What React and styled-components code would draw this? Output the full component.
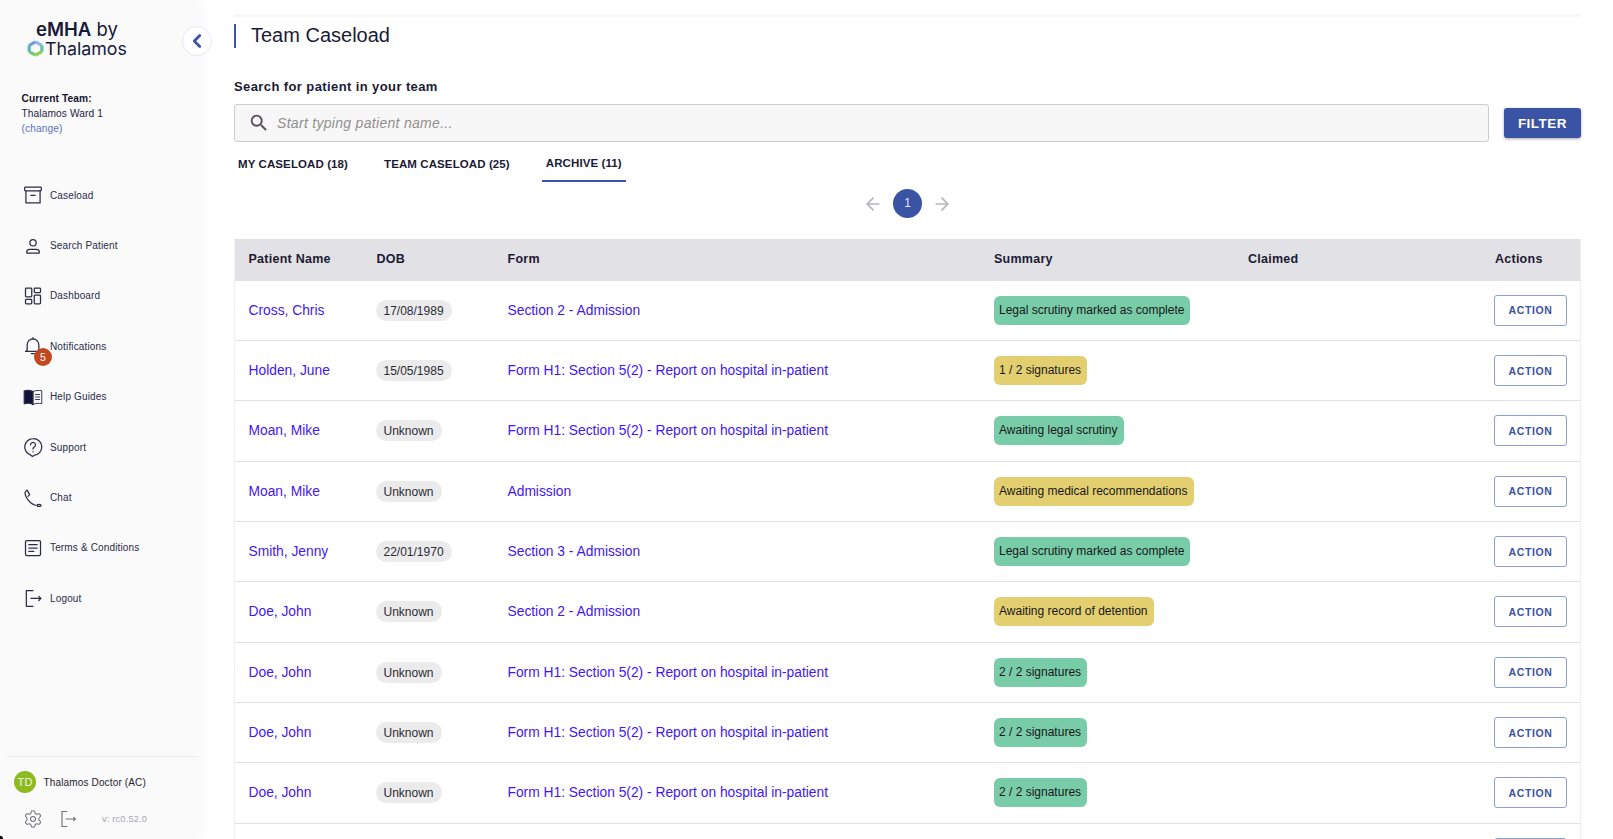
import React from "react";
import styled, { createGlobalStyle } from "styled-components";
import { ArrowLeft, ArrowRight, ChevronLeft, Settings } from "lucide-react";
import { MdSearch } from "react-icons/md";

const Global = createGlobalStyle`
  html, body {
    margin: 0;
    padding: 0;
    background: #fff;
    font-family: "Liberation Sans", Arial, sans-serif;
    color: #1b1b35;
  }
  * { box-sizing: border-box; }
`;

const Page = styled.div`
  position: relative;
  display: flex;
  width: 1613px;
  height: 839px;
  overflow: hidden;
`;

const Corner = styled.div`
  position: absolute;
  left: 0;
  bottom: 0;
  width: 3px;
  height: 4px;
  background: radial-gradient(circle at 0 100%, #111 55%, transparent 75%);
  z-index: 3;
`;

const Sidebar = styled.aside`
  position: relative;
  flex: 0 0 198px;
  display: flex;
  flex-direction: column;
  background: #fafafb;
  box-shadow: 2px 0 14px rgba(30, 30, 60, 0.045);
`;

const Logo = styled.div`
  margin: 20px 0 0 27px;
  height: 38px;
  color: #16193a;
  font-family: Inter, sans-serif;
`;

const LogoTop = styled.div`
  padding-left: 9px;
  font-size: 18.5px;
  line-height: 19px;
  font-weight: 400;
  b { font-weight: 600; }
`;

const LogoBottom = styled.div`
  display: flex;
  align-items: center;
  gap: 1px;
  font-size: 17.8px;
  line-height: 19px;
`;

const CollapseButton = styled.button`
  position: absolute;
  top: 25.5px;
  left: 182px;
  width: 30px;
  height: 30px;
  padding: 0;
  display: flex;
  align-items: center;
  justify-content: center;
  background: #fff;
  border: 1px solid #e6e7f3;
  border-radius: 50%;
  color: #3a53a4;
`;

const Team = styled.div`
  margin: 33px 0 0 21.5px;
  font-size: 10.2px;
  line-height: 15px;
  letter-spacing: 0.1px;
  color: #24243f;
  b { display: block; color: #15152f; }
  span { color: #5b73bd; }
`;

const Nav = styled.nav`
  margin-top: 34px;
  display: flex;
  flex-direction: column;
`;

const NavItem = styled.div`
  position: relative;
  height: 50.4px;
  display: flex;
  align-items: center;
  gap: 7px;
  padding-left: 23px;
  font-size: 10px;
  letter-spacing: 0.15px;
  color: #2b2b47;
  svg { flex: 0 0 20px; }
`;

const Badge = styled.span`
  position: absolute;
  left: 34px;
  top: 27px;
  width: 18px;
  height: 18px;
  border-radius: 50%;
  background: #c4481f;
  color: #fff;
  font-size: 10.5px;
  line-height: 18px;
  text-align: center;
`;

const Footer = styled.div`
  margin: auto 0 0 7px;
  height: 83px;
  border-top: 1px solid #ececee;
`;

const UserRow = styled.div`
  display: flex;
  align-items: center;
  gap: 7.5px;
  margin: 14px 0 0 7px;
  font-size: 10px;
  letter-spacing: 0.15px;
  color: #24242c;
`;

const Avatar = styled.div`
  width: 22px;
  height: 22px;
  border-radius: 50%;
  background: #8cba20;
  color: #f3f7e4;
  font-size: 11px;
  line-height: 22px;
  text-align: center;
`;

const ToolRow = styled.div`
  display: flex;
  align-items: center;
  margin: 15.5px 0 0 16px;
  color: #6f6f78;
`;

const Version = styled.span`
  margin-left: 25px;
  font-size: 9.2px;
  letter-spacing: 0.2px;
  color: #a5a5ab;
`;

const Main = styled.main`
  flex: 1;
  min-width: 0;
  padding: 14px 32px 0 36px;
`;

const TopRule = styled.div`
  height: 3px;
  background: #f7f7f8;
`;

const Title = styled.h1`
  margin: 7px 0 0;
  height: 24px;
  padding-left: 15px;
  border-left: 2px solid #3a53a4;
  font-size: 20px;
  line-height: 22px;
  font-weight: 400;
  color: #1b1b35;
`;

const SearchLabel = styled.div`
  margin-top: 31px;
  font-size: 13px;
  line-height: 16px;
  font-weight: 700;
  letter-spacing: 0.4px;
`;

const SearchRow = styled.div`
  margin-top: 9px;
  display: flex;
  align-items: center;
  gap: 15px;
`;

const SearchBox = styled.label`
  flex: 1;
  height: 38px;
  display: flex;
  align-items: center;
  gap: 7px;
  padding-left: 13px;
  background: #f7f7f7;
  border: 1px solid #cccccc;
  border-radius: 3px;
  color: #5a4a55;
`;

const SearchInput = styled.input`
  flex: 1;
  padding: 0;
  border: 0;
  outline: 0;
  background: transparent;
  font: italic 14px "Liberation Sans", Arial, sans-serif;
  letter-spacing: 0.3px;
  &::placeholder { color: #8f8f8f; opacity: 1; }
`;

const FilterButton = styled.button`
  width: 77px;
  height: 30px;
  padding: 0;
  border: 0;
  border-radius: 3px;
  background: #3a53a4;
  box-shadow: 0 1px 3px rgba(0, 0, 0, 0.35);
  color: #fff;
  font: 700 13.5px "Liberation Sans", Arial, sans-serif;
  letter-spacing: 0.5px;
`;

const Tabs = styled.div`
  margin-top: 8px;
  height: 32px;
  display: flex;
  gap: 28px;
`;

const Tab = styled.div`
  display: flex;
  align-items: center;
  padding: 0 4px 5px;
  font-size: 11.5px;
  font-weight: 700;
  letter-spacing: 0.1px;
  color: #1b1b35;
  border-bottom: ${props => (props.active ? "2px solid #3a53a4" : "0")};
`;

const Pagination = styled.div`
  margin-top: 7px;
  height: 29px;
  display: flex;
  align-items: center;
  justify-content: center;
  gap: 10px;
  color: #b4b4bc;
`;

const PageDot = styled.div`
  width: 29px;
  height: 29px;
  border-radius: 50%;
  background: #3a53a4;
  color: #e8ebf6;
  font-size: 12px;
  line-height: 29px;
  text-align: center;
`;

const Table = styled.div`
  margin-top: 21px;
  border-left: 1px solid #f0f0f2;
  border-right: 1px solid #f0f0f2;
`;

const columns = "128px 131px 486.5px 254px 247px 1fr";

const HeadRow = styled.div`
  display: grid;
  grid-template-columns: ${columns};
  align-items: center;
  height: 41.6px;
  padding: 0 0 1px 13.5px;
  background: #e1e1e6;
  font-size: 12.5px;
  font-weight: 700;
  letter-spacing: 0.25px;
`;

const Row = styled.div`
  display: grid;
  grid-template-columns: ${columns};
  align-items: center;
  height: 60.33px;
  padding-left: 13.5px;
  border-bottom: 1px solid #e1e1e3;
`;

const PatientLink = styled.a`
  color: #4316f5;
  font-size: 13.8px;
`;

const DobPill = styled.span`
  justify-self: start;
  margin-left: -1px;
  height: 21px;
  padding: 0 8px;
  border-radius: 11px;
  background: #ebebeb;
  color: #2b2b35;
  font-size: 12px;
  line-height: 22px;
`;

const StatusPill = styled.span`
  justify-self: start;
  height: 29px;
  padding: 0 6px 0 5px;
  border-radius: 6px;
  background: ${props => (props.tone === "green" ? "#78cca8" : "#e3cf70")};
  color: #17171a;
  font-size: 12px;
  line-height: 28px;
`;

const ActionButton = styled.button`
  width: 73px;
  height: 31px;
  margin-left: -1px;
  padding: 0;
  background: #fff;
  border: 1px solid #8c9ed6;
  border-radius: 3px;
  color: #3a53a4;
  font: 700 10.5px "Liberation Sans", Arial, sans-serif;
  letter-spacing: 0.6px;
`;

const Icon = ({ children, size = 20 }) => (
  <svg
    width={size}
    height={size}
    viewBox="0 0 24 24"
    fill="none"
    stroke="#2b2b47"
    strokeWidth="1.5"
    strokeLinecap="round"
    strokeLinejoin="round"
  >
    {children}
  </svg>
);

const navItems = [
  {
    label: "Caseload",
    icon: (
      <>
        <rect x="2" y="2.5" width="20" height="4.5" rx="1" />
        <path d="M3.5 7v14.5h17V7M9.5 12.5h5" />
      </>
    ),
  },
  {
    label: "Search Patient",
    icon: (
      <>
        <circle cx="12" cy="8" r="3.8" />
        <path d="M4.5 20.5v-1.3c0-2 1.6-3.2 3.5-3.2h8c1.9 0 3.5 1.2 3.5 3.2v1.3z" />
      </>
    ),
  },
  {
    label: "Dashboard",
    icon: (
      <>
        <rect x="3" y="2.5" width="7.5" height="10.5" rx="1" />
        <rect x="13.5" y="2.5" width="7.5" height="5.5" rx="1" />
        <rect x="3" y="16" width="7.5" height="5.5" rx="1" />
        <rect x="13.5" y="11" width="7.5" height="10.5" rx="1" />
      </>
    ),
  },
  {
    label: "Notifications",
    badge: 5,
    icon: (
      <>
        <path d="M5 17V10.5a7 7 0 0 1 14 0V17l2 1.5H3z" />
        <path d="M12 3.5V2M10 21h4" />
      </>
    ),
  },
  {
    label: "Help Guides",
    icon: (
      <>
        <path d="M12 5.5C9.5 4 5 3.8 1.5 4.5V20c3.5-.8 8-.5 10.5 1z" fill="#10123a" />
        <path d="M12 5.5c2.5-1.5 7-1.7 10.5-1V20c-3.5-.8-8-.5-10.5 1zM15 9h5M15 12h5M15 15h5" strokeWidth="1.1" />
      </>
    ),
  },
  {
    label: "Support",
    icon: (
      <>
        <path d="M12 2a10 10 0 0 0-3 19.5L11.5 23.5 13 22a10 10 0 0 0-1-20z" />
        <path d="M9 9.5a3 3 0 1 1 4.5 2.6c-1 .6-1.5 1.2-1.5 2.4M12 17.5v.2" />
      </>
    ),
  },
  {
    label: "Chat",
    icon: (
      <path d="M5 2.5 2.5 5c-.5 5 5.5 15 14.5 16 .5-1.5 1.5-1.5 3.500-1 1.500.3 1.500 2 0 2h-3M5 2.500l3 5.500-2 2" />
    ),
  },
  {
    label: "Terms & Conditions",
    icon: (
      <>
        <rect x="3" y="3" width="18" height="18" rx="1.5" />
        <path d="M7 8h10M7 12h10M7 16h6" />
      </>
    ),
  },
  {
    label: "Logout",
    icon: (
      <>
        <path d="M12 3H4v19h8" />
        <path d="M9.5 12.5h12M19 10l2.5 2.5L19 15" />
      </>
    ),
  },
];

const SECTION_5 = "Form H1: Section 5(2) - Report on hospital in-patient";

const rows = [
  ["Cross, Chris", "17/08/1989", "Section 2 - Admission", "Legal scrutiny marked as complete", "green"],
  ["Holden, June", "15/05/1985", SECTION_5, "1 / 2 signatures", "yellow"],
  ["Moan, Mike", "Unknown", SECTION_5, "Awaiting legal scrutiny", "green"],
  ["Moan, Mike", "Unknown", "Admission", "Awaiting medical recommendations", "yellow"],
  ["Smith, Jenny", "22/01/1970", "Section 3 - Admission", "Legal scrutiny marked as complete", "green"],
  ["Doe, John", "Unknown", "Section 2 - Admission", "Awaiting record of detention", "yellow"],
  ["Doe, John", "Unknown", SECTION_5, "2 / 2 signatures", "green"],
  ["Doe, John", "Unknown", SECTION_5, "2 / 2 signatures", "green"],
  ["Doe, John", "Unknown", SECTION_5, "2 / 2 signatures", "green"],
];

export default function App() {
  return (
    <Page>
      <Global />
      <Corner />
      <Sidebar>
        <Logo>
          <LogoTop>
            <b>eMHA</b> by
          </LogoTop>
          <LogoBottom>
            <svg width="17" height="17" viewBox="0 0 24 24" fill="none" strokeWidth="4.5">
              <path d="M12 2.5l9 5" stroke="#8fb8e8" />
              <path d="M21 7.5v9" stroke="#5ec7a0" />
              <path d="M21 16.5L12 21.5" stroke="#8ed14f" />
              <path d="M12 21.5l-9-5" stroke="#6fcf6a" />
              <path d="M3 16.5v-9" stroke="#54b8c4" />
              <path d="M3 7.5L12 2.5" stroke="#6d9fe0" />
            </svg>
            Thalamos
          </LogoBottom>
        </Logo>
        <CollapseButton>
          <ChevronLeft size={22} strokeWidth={3} />
        </CollapseButton>
        <Team>
          <b>Current Team:</b>
          Thalamos Ward 1
          <br />
          <span>(change)</span>
        </Team>
        <Nav>
          {navItems.map(item => (
            <NavItem key={item.label}>
              <Icon>{item.icon}</Icon>
              {item.label}
              {item.badge && <Badge>{item.badge}</Badge>}
            </NavItem>
          ))}
        </Nav>
        <Footer>
          <UserRow>
            <Avatar>TD</Avatar>
            Thalamos Doctor (AC)
          </UserRow>
          <ToolRow>
            <Settings size={20} strokeWidth={1.3} />
            <svg
              style={{ marginLeft: 16 }}
              width="18"
              height="18"
              viewBox="0 0 24 24"
              fill="none"
              stroke="currentColor"
              strokeWidth="1.5"
            >
              <path d="M11 2H4v20h7M9 12h13M19 9.5l3 2.5-3 2.5" />
            </svg>
            <Version>v: rc0.52.0</Version>
          </ToolRow>
        </Footer>
      </Sidebar>
      <Main>
        <TopRule />
        <Title>Team Caseload</Title>
        <SearchLabel>Search for patient in your team</SearchLabel>
        <SearchRow>
          <SearchBox>
            <MdSearch size={22} />
            <SearchInput placeholder="Start typing patient name..." />
          </SearchBox>
          <FilterButton>FILTER</FilterButton>
        </SearchRow>
        <Tabs>
          <Tab>MY CASELOAD (18)</Tab>
          <Tab>TEAM CASELOAD (25)</Tab>
          <Tab active>ARCHIVE (11)</Tab>
        </Tabs>
        <Pagination>
          <ArrowLeft size={20} strokeWidth={2} />
          <PageDot>1</PageDot>
          <ArrowRight size={20} strokeWidth={2} />
        </Pagination>
        <Table>
          <HeadRow>
            <div>Patient Name</div>
            <div>DOB</div>
            <div>Form</div>
            <div>Summary</div>
            <div>Claimed</div>
            <div>Actions</div>
          </HeadRow>
          {rows.map((row, index) => (
            <Row key={index}>
              <PatientLink>{row[0]}</PatientLink>
              <DobPill>{row[1]}</DobPill>
              <PatientLink>{row[2]}</PatientLink>
              <StatusPill tone={row[4]}>{row[3]}</StatusPill>
              <div />
              <ActionButton>ACTION</ActionButton>
            </Row>
          ))}
          <Row>
            <div />
            <div />
            <div />
            <div />
            <div />
            <ActionButton aria-label="Action" />
          </Row>
        </Table>
      </Main>
    </Page>
  );
}
